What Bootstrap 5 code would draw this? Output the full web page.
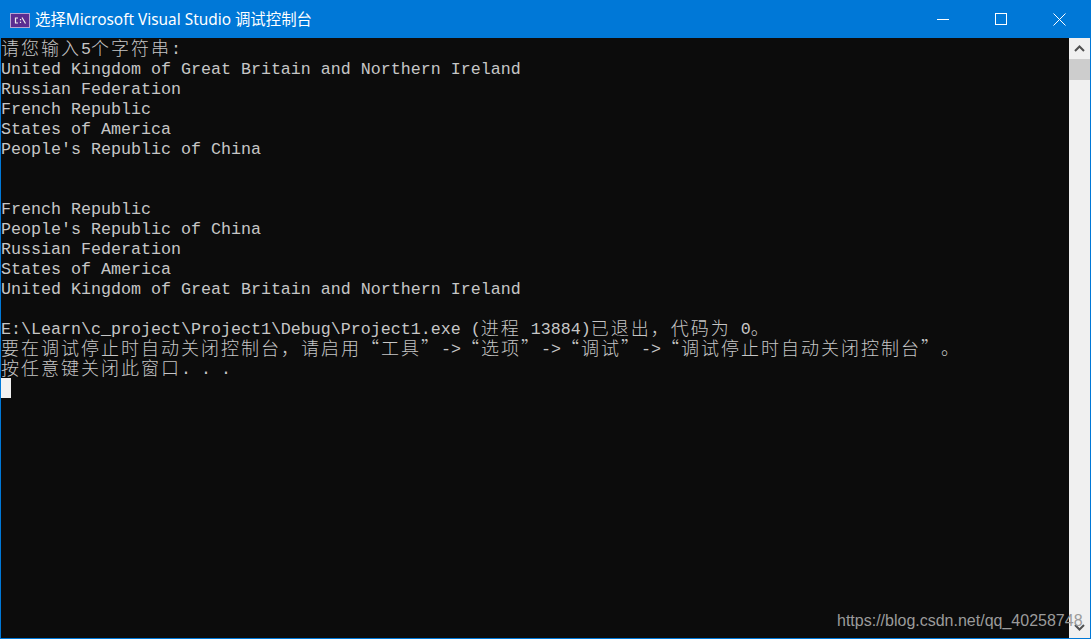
<!DOCTYPE html>
<html lang="zh-CN">
<head>
<meta charset="utf-8">
<title>选择Microsoft Visual Studio 调试控制台</title>
<link href="https://cdn.jsdelivr.net/npm/bootstrap@5.3.0/dist/css/bootstrap.min.css" rel="stylesheet">
<style>
html,body{height:100%;overflow:hidden;background:#0c0c0c}
.win-frame{height:639px;border:1px solid #0078d7;border-top:0;position:relative}
.win-title{height:38px;background:#0078d7;color:#fff;font:15.4px/38px "Noto Sans","Noto Sans CJK SC",sans-serif;padding:0 2px 0 9px}
.win-icon{flex:none;margin-top:2px}
.win-name{margin-left:5px;margin-top:1px}
.win-ctl{width:58px;height:38px}
.con-area{min-height:0;background:#0c0c0c}
.con-text{flex:1 1 auto;color:#c6c6c6;font:16.67px/20px "Liberation Mono",monospace}
.con-line{height:20px;white-space:pre;padding-top:2px}
.cj{font-family:"Noto Sans CJK SC",sans-serif;font-size:18px;letter-spacing:2px;font-weight:300;line-height:0;vertical-align:-1px;text-spacing-trim:space-all;font-feature-settings:"palt" 0}
.cursor-block{width:10px;height:20px;background:#f2f2f2}
.sbar{width:21px;background:#f0f0f0;flex:none}
.sbar-btn{height:21px}
.sbar-thumb{height:21px;background:#cdcdcd}
.mark-url{position:absolute;left:836px;top:612px;font:16px/18px "Liberation Sans",sans-serif;color:#9b9b9b;white-space:nowrap;width:251px;overflow:hidden}
</style>
</head>
<body class="m-0">
<div class="win-frame d-flex flex-column">
  <div class="win-title d-flex align-items-center flex-shrink-0">
    <svg class="win-icon" width="20" height="15" viewBox="0 0 20 15"><rect x=".5" y=".5" width="19" height="14" fill="#5c2d91" stroke="#b9a3d3"/><path d="M8 5H5.500v5H8M10.500 6v1.200M10.500 8.800V10M12 4.500l3.500 6" fill="none" stroke="#eee" stroke-width="1.200"/></svg>
    <span class="win-name flex-grow-1">选择Microsoft Visual Studio 调试控制台</span>
    <div class="win-ctl d-flex align-items-center justify-content-center"><svg width="12" height="12" viewBox="0 0 12 12"><path d="M0 6.500H12" stroke="#fff"/></svg></div>
    <div class="win-ctl d-flex align-items-center justify-content-center"><svg width="12" height="12" viewBox="0 0 12 12"><rect x=".5" y=".5" width="11" height="11" fill="none" stroke="#fff"/></svg></div>
    <div class="win-ctl d-flex align-items-center justify-content-center"><svg width="13" height="13" viewBox="0 0 13 13"><path d="M.5.500l12 12M12.500.500l-12 12" stroke="#fff" fill="none"/></svg></div>
  </div>
  <div class="con-area d-flex flex-grow-1">
    <div class="con-text">
      <div class="con-line"><span class="cj">请您输入</span>5<span class="cj">个字符串</span>:</div>
      <div class="con-line">United Kingdom of Great Britain and Northern Ireland</div>
      <div class="con-line">Russian Federation</div>
      <div class="con-line">French Republic</div>
      <div class="con-line">States of America</div>
      <div class="con-line">People's Republic of China</div>
      <div class="con-line"></div>
      <div class="con-line"></div>
      <div class="con-line">French Republic</div>
      <div class="con-line">People's Republic of China</div>
      <div class="con-line">Russian Federation</div>
      <div class="con-line">States of America</div>
      <div class="con-line">United Kingdom of Great Britain and Northern Ireland</div>
      <div class="con-line"></div>
      <div class="con-line">E:\Learn\c_project\Project1\Debug\Project1.exe (<span class="cj">进程</span> 13884)<span class="cj">已退出，代码为</span> 0<span class="cj">。</span></div>
      <div class="con-line"><span class="cj">要在调试停止时自动关闭控制台，请启用“工具”</span>-&gt;<span class="cj">“选项”</span>-&gt;<span class="cj">“调试”</span>-&gt;<span class="cj">“调试停止时自动关闭控制台”。</span></div>
      <div class="con-line"><span class="cj">按任意键关闭此窗口</span>. . .</div>
      <div class="cursor-block"></div>
    </div>
    <div class="sbar d-flex flex-column">
      <div class="sbar-btn d-flex align-items-center justify-content-center"><svg width="11" height="7" viewBox="0 0 11 7"><path d="M1 6l4.500-4.500L10 6" fill="none" stroke="#505050" stroke-width="2"/></svg></div>
      <div class="sbar-thumb"></div>
      <div class="flex-grow-1"></div>
      <div class="sbar-btn d-flex align-items-center justify-content-center"><svg width="11" height="7" viewBox="0 0 11 7"><path d="M1 1l4.500 4.500L10 1" fill="none" stroke="#505050" stroke-width="2"/></svg></div>
    </div>
  </div>
  <div class="mark-url">https://blog.csdn.net/qq_40258748</div>
</div>
<script src="https://cdn.jsdelivr.net/npm/bootstrap@5.3.0/dist/js/bootstrap.bundle.min.js"></script>
</body>
</html>
